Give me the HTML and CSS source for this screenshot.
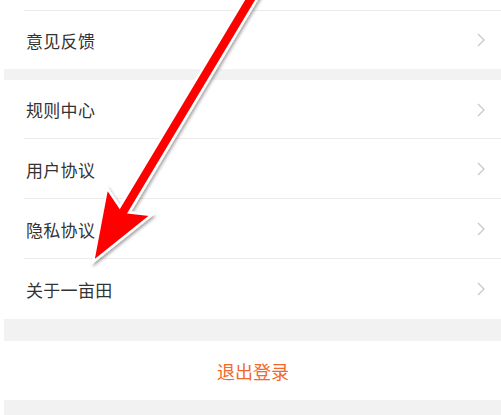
FILE: index.html
```html
<!DOCTYPE html>
<html lang="zh-CN">
<head>
    <meta charset="UTF-8">
    <title>设置</title>
    <link rel="stylesheet" href="styles.css">
</head>
<body>

<!-- ===================== 第一组 ===================== -->
<div class="group">
    <div class="row row-cut"></div>
    <div class="row row-first">
        <span class="label">意见反馈</span>
        <svg class="chevron" width="8" height="14" viewBox="0 0 8 14"><polyline points="1,1 7,7 1,13"/></svg>
    </div>
</div>

<div class="gap gap-small"></div>

<!-- ===================== 第二组 ===================== -->
<div class="group">
    <div class="row row-top">
        <span class="label">规则中心</span>
        <svg class="chevron" width="8" height="14" viewBox="0 0 8 14"><polyline points="1,1 7,7 1,13"/></svg>
    </div>
    <div class="row">
        <span class="label">用户协议</span>
        <svg class="chevron" width="8" height="14" viewBox="0 0 8 14"><polyline points="1,1 7,7 1,13"/></svg>
    </div>
    <div class="row">
        <span class="label">隐私协议</span>
        <svg class="chevron" width="8" height="14" viewBox="0 0 8 14"><polyline points="1,1 7,7 1,13"/></svg>
    </div>
    <div class="row row-last">
        <span class="label">关于一亩田</span>
        <svg class="chevron" width="8" height="14" viewBox="0 0 8 14"><polyline points="1,1 7,7 1,13"/></svg>
    </div>
</div>

<div class="gap gap-big"></div>

<!-- ===================== 退出 ===================== -->
<div class="logout">退出登录</div>

<div class="gap gap-bottom"></div>

<!-- 标注箭头 -->
<svg class="arrow" width="501" height="415" viewBox="0 0 501 415">
    <defs>
        <filter id="shadow" x="-20%" y="-20%" width="140%" height="140%">
            <feDropShadow dx="1.5" dy="2" stdDeviation="1.5" flood-color="#000" flood-opacity="0.35"/>
        </filter>
    </defs>
    <polygon filter="url(#shadow)"
        points="93,262 107,188 119.7,206.9 251.4,-12.8 260.8,-7.2 129.1,212.5 151.6,214.9"
        fill="#ff0000" stroke="#ffffff" stroke-width="2.5" stroke-linejoin="miter"/>
</svg>

</body>
</html>
```

FILE: styles.css
```css
body {
    margin: 0;
    background: #ffffff;
    font-family: "Noto Sans CJK SC", "Noto Sans", sans-serif;
    width: 501px;
    height: 415px;
    overflow: hidden;
    position: relative;
}

.group { background: #ffffff; }

.row {
    display: flex;
    align-items: center;
    justify-content: space-between;
    height: 60px;
    padding: 0 16px 0 26px;
    position: relative;
}

.row::after {
    content: "";
    position: absolute;
    left: 24px;
    right: 0;
    bottom: 0;
    height: 1px;
    background: #ebebeb;
}

.row-cut { height: 11px; }
.row-first { height: 58px; }
.row-top { height: 59px; }
.row-first::after, .row-last::after { display: none; }

.label {
    font-size: 17px;
    color: #333333;
    letter-spacing: 0.3px;
}

.chevron {
    fill: none;
    stroke: #c8c8c8;
    stroke-width: 1.3;
}

.gap {
    background: #f2f2f2;
    margin-left: 4px;
}
.gap-small { height: 11px; }
.gap-big { height: 22px; }
.gap-bottom { height: 20px; }

.logout {
    height: 59px;
    display: flex;
    align-items: center;
    justify-content: center;
    padding-left: 5px;
    font-size: 18px;
    color: #f2692b;
}

.arrow {
    position: absolute;
    top: 0;
    left: 0;
}
```
